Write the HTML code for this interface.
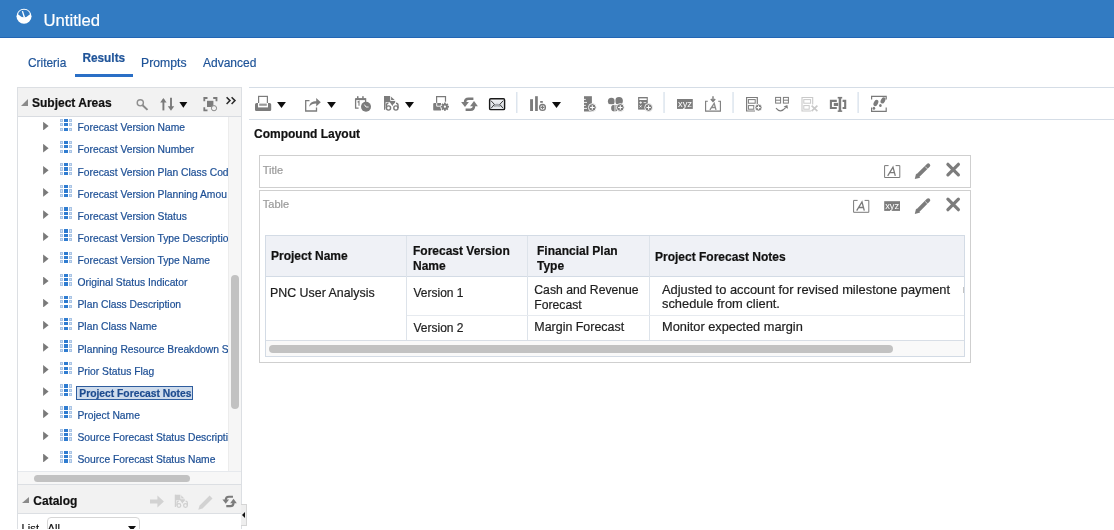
<!DOCTYPE html>
<html><head><meta charset="utf-8">
<style>
*{box-sizing:border-box;margin:0;padding:0}
html,body{width:1114px;height:530px;overflow:hidden;background:#fff;font-family:"Liberation Sans",sans-serif;position:relative}
.a{position:absolute}
.t{position:absolute;white-space:nowrap;line-height:1;-webkit-text-stroke-width:0.2px}
#hdr{left:0;top:0;width:1114px;height:38px;background:#327bc2;border-bottom:1px solid #2366b4}
.tab{color:#1f5499}
#lp{left:17px;top:87px;width:225px;height:450px;border:1px solid #dcdfe3;border-bottom:none}
.ph{background:#f2f2f2}
.tr{color:#1d4f95;font-size:10.3px}
.ex{position:absolute;left:43.1px;width:5.5px;height:8.8px;background:#7a7a7a;clip-path:polygon(0 0,100% 50%,0 100%)}
.gi{position:absolute;left:60px;width:12px;height:12px}
#tb{left:249px;top:87px;width:865px;height:33px;border-top:1px solid #d5dde6;border-bottom:1px solid #d5dde6}
.ic{position:absolute}
.dd{position:absolute;width:0;height:0;border-left:4.5px solid transparent;border-right:4.5px solid transparent;border-top:6.5px solid #111}
.sep{position:absolute;top:92px;width:2px;height:22px;background:#dfe6ee}
.box{position:absolute;border:1px solid #cfcfcf}
.lbl{color:#9a9a9a;font-size:11px}
.th{font-weight:bold;color:#111;font-size:12px}
.td{color:#1e1e1e;font-size:12.4px}
.gi i{position:absolute;width:3px;height:3.2px;border:0.8px solid #a9c4e5;background:#d3e1f2}
.gi i.d{width:3.8px;background:#2f7cd0;border-color:#2f7cd0}
.gi i:nth-child(1),.gi i:nth-child(4),.gi i:nth-child(7){left:0}
.gi i:nth-child(2),.gi i:nth-child(5),.gi i:nth-child(8){left:4px}
.gi i:nth-child(3),.gi i:nth-child(6),.gi i:nth-child(9){left:9px}
.gi i:nth-child(-n+3){top:0.3px}
.gi i:nth-child(n+4):nth-child(-n+6){top:4.6px}
.gi i:nth-child(n+7){top:9px}
</style></head><body><div id="root" style="position:absolute;left:0;top:0;width:1114px;height:528.9px;overflow:hidden;background:#fff;will-change:transform">
<div id="hdr" class="a"></div>
<svg class="a" style="left:0;top:0" width="40" height="38" viewBox="0 0 40 38">
<circle cx="24" cy="16.2" r="7.5" fill="#fff"/>
<path d="M18 14.2 A6.3 6.3 0 0 1 30 14.2 Q24 20.2 18 14.2z" fill="#327bc2"/>
<path d="M22.4 11.1 L24.1 16.4" stroke="#fff" stroke-width="1.4"/><circle cx="24.2" cy="16.8" r="0.9" fill="#fff"/>
</svg>
<div class="t" style="left:43.5px;top:13.3px;font-size:16.7px;color:#fff">Untitled</div>

<!-- tabs -->
<div class="t tab" style="left:28px;top:57.7px;font-size:11.9px">Criteria</div>
<div class="t tab" style="left:82.4px;top:53.1px;font-size:11.85px;font-weight:bold">Results</div>
<div class="t tab" style="left:141.1px;top:56.7px;font-size:12.2px">Prompts</div>
<div class="t tab" style="left:203px;top:56.8px;font-size:12px">Advanced</div>
<div class="a" style="left:74.5px;top:74px;width:58.7px;height:3px;background:#2a6fc6"></div>

<!-- left panel -->
<div id="lp" class="a"></div>
<div class="a ph" style="left:18px;top:88px;width:223px;height:29px;border-bottom:1px solid #d9dce1"></div>
<div class="a" style="left:20.8px;top:99px;width:0;height:0;border-left:7px solid transparent;border-bottom:7px solid #8a8a8a"></div>
<div class="t" style="left:32px;top:96.5px;font-size:12px;font-weight:bold;color:#111">Subject Areas</div>
<div class="a" style="left:228px;top:117px;width:13px;height:354px;background:#f6f6f6;border-left:1px solid #ececec"></div>
<div class="a" style="left:231px;top:275px;width:8px;height:134px;border-radius:4px;background:#c2c2c2"></div>
<div class="a" style="left:18px;top:471px;width:223px;height:14px;background:#f7f7f7;border-top:1px solid #e6e9ed"></div>
<div class="a" style="left:34px;top:475px;width:156px;height:6.5px;border-radius:3.5px;background:#c2c2c2"></div>
<div class="a ph" style="left:18px;top:484px;width:223px;height:30px;border-top:1px solid #dcdfe3;border-bottom:1px solid #dcdfe3"></div>
<div class="a" style="left:22px;top:496.5px;width:0;height:0;border-left:7px solid transparent;border-bottom:6.5px solid #8a8a8a"></div>
<div class="t" style="left:33.3px;top:494.5px;font-size:12px;font-weight:bold;color:#111">Catalog</div>
<div class="t" style="left:21.6px;top:523.3px;font-size:11.2px;color:#111">List</div>
<div class="a" style="left:46.5px;top:516.5px;width:93px;height:20px;border:1px solid #d6d6d6;border-radius:4px;background:#fff"></div>
<div class="t" style="left:47.6px;top:523.4px;font-size:11.2px;color:#111">All</div>
<div class="a" style="left:128px;top:526px;width:0;height:0;border-left:4.5px solid transparent;border-right:4.5px solid transparent;border-top:5px solid #111"></div>
<div class="a" style="left:241px;top:503.5px;width:6px;height:22px;background:#eeeeee;border:1px solid #d5d5d5;border-left:none"></div>
<div class="a" style="left:242px;top:511.5px;width:0;height:0;border-top:3px solid transparent;border-bottom:3px solid transparent;border-right:3.5px solid #111"></div>
<div class="a" style="left:0;top:0;width:228px;height:471px;overflow:hidden">
<div class="ex" style="top:121.65px"></div>
<div class="gi" style="top:118.50px"><i></i><i class="d"></i><i></i><i></i><i class="d"></i><i></i><i></i><i class="d"></i><i></i></div>
<div class="t tr" style="left:77.5px;top:123.27px">Forecast Version Name</div>
<div class="ex" style="top:143.78px"></div>
<div class="gi" style="top:140.63px"><i></i><i class="d"></i><i></i><i></i><i class="d"></i><i></i><i></i><i class="d"></i><i></i></div>
<div class="t tr" style="left:77.5px;top:145.40px">Forecast Version Number</div>
<div class="ex" style="top:165.91px"></div>
<div class="gi" style="top:162.76px"><i></i><i class="d"></i><i></i><i></i><i class="d"></i><i></i><i></i><i class="d"></i><i></i></div>
<div class="t tr" style="left:77.5px;top:167.53px">Forecast Version Plan Class Cod</div>
<div class="ex" style="top:188.04px"></div>
<div class="gi" style="top:184.89px"><i></i><i class="d"></i><i></i><i></i><i class="d"></i><i></i><i></i><i class="d"></i><i></i></div>
<div class="t tr" style="left:77.5px;top:189.66px">Forecast Version Planning Amou</div>
<div class="ex" style="top:210.17px"></div>
<div class="gi" style="top:207.02px"><i></i><i class="d"></i><i></i><i></i><i class="d"></i><i></i><i></i><i class="d"></i><i></i></div>
<div class="t tr" style="left:77.5px;top:211.79px">Forecast Version Status</div>
<div class="ex" style="top:232.30px"></div>
<div class="gi" style="top:229.15px"><i></i><i class="d"></i><i></i><i></i><i class="d"></i><i></i><i></i><i class="d"></i><i></i></div>
<div class="t tr" style="left:77.5px;top:233.92px">Forecast Version Type Descriptio</div>
<div class="ex" style="top:254.43px"></div>
<div class="gi" style="top:251.28px"><i></i><i class="d"></i><i></i><i></i><i class="d"></i><i></i><i></i><i class="d"></i><i></i></div>
<div class="t tr" style="left:77.5px;top:256.05px">Forecast Version Type Name</div>
<div class="ex" style="top:276.56px"></div>
<div class="gi" style="top:273.41px"><i></i><i class="d"></i><i></i><i></i><i class="d"></i><i></i><i></i><i class="d"></i><i></i></div>
<div class="t tr" style="left:77.5px;top:278.18px">Original Status Indicator</div>
<div class="ex" style="top:298.69px"></div>
<div class="gi" style="top:295.54px"><i></i><i class="d"></i><i></i><i></i><i class="d"></i><i></i><i></i><i class="d"></i><i></i></div>
<div class="t tr" style="left:77.5px;top:300.31px">Plan Class Description</div>
<div class="ex" style="top:320.82px"></div>
<div class="gi" style="top:317.67px"><i></i><i class="d"></i><i></i><i></i><i class="d"></i><i></i><i></i><i class="d"></i><i></i></div>
<div class="t tr" style="left:77.5px;top:322.44px">Plan Class Name</div>
<div class="ex" style="top:342.95px"></div>
<div class="gi" style="top:339.80px"><i></i><i class="d"></i><i></i><i></i><i class="d"></i><i></i><i></i><i class="d"></i><i></i></div>
<div class="t tr" style="left:77.5px;top:344.57px">Planning Resource Breakdown S</div>
<div class="ex" style="top:365.08px"></div>
<div class="gi" style="top:361.93px"><i></i><i class="d"></i><i></i><i></i><i class="d"></i><i></i><i></i><i class="d"></i><i></i></div>
<div class="t tr" style="left:77.5px;top:366.70px">Prior Status Flag</div>
<div class="ex" style="top:387.21px"></div>
<div class="gi" style="top:384.06px"><i></i><i class="d"></i><i></i><i></i><i class="d"></i><i></i><i></i><i class="d"></i><i></i></div>
<div class="t tr" style="left:76px;top:385.76px;height:14.5px;width:117px;border:1px solid #2f5d9e;background:#cfdcec;font-weight:bold;padding:1.9px 0 0 2.3px;font-size:10.3px;color:#1d4b8f">Project Forecast Notes</div>
<div class="ex" style="top:409.34px"></div>
<div class="gi" style="top:406.19px"><i></i><i class="d"></i><i></i><i></i><i class="d"></i><i></i><i></i><i class="d"></i><i></i></div>
<div class="t tr" style="left:77.5px;top:410.96px">Project Name</div>
<div class="ex" style="top:431.47px"></div>
<div class="gi" style="top:428.32px"><i></i><i class="d"></i><i></i><i></i><i class="d"></i><i></i><i></i><i class="d"></i><i></i></div>
<div class="t tr" style="left:77.5px;top:433.09px">Source Forecast Status Descripti</div>
<div class="ex" style="top:453.60px"></div>
<div class="gi" style="top:450.45px"><i></i><i class="d"></i><i></i><i></i><i class="d"></i><i></i><i></i><i class="d"></i><i></i></div>
<div class="t tr" style="left:77.5px;top:455.22px">Source Forecast Status Name</div>
</div>
<div id="tb" class="a"></div>

<div class="t" style="left:254px;top:128.2px;font-size:12px;font-weight:bold;color:#111">Compound Layout</div>
<div class="box" style="left:259px;top:155px;width:712px;height:33px"></div>
<div class="t lbl" style="left:262.8px;top:164.5px">Title</div>
<div class="box" style="left:259px;top:190px;width:712px;height:173px"></div>
<div class="t lbl" style="left:262.8px;top:199.4px">Table</div>
<svg class="a" style="left:0;top:0" width="1114" height="530" viewBox="0 0 1114 530">
<g fill="#7c7c7c" stroke="none">
<!-- printer -->
<rect x="258.6" y="96.4" width="8.8" height="10" fill="none" stroke="#7c7c7c" stroke-width="1.2"/>
<path d="M256.6 103 h13 a1.6 1.6 0 0 1 1.6 1.6 v5.2 a1.3 1.3 0 0 1 -1.3 1.3 h-13.6 a1.3 1.3 0 0 1 -1.3 -1.3 v-5.2 a1.6 1.6 0 0 1 1.6 -1.6z"/>
<rect x="258" y="103" width="10" height="4.4" fill="#fff"/>
<rect x="259.2" y="103.6" width="7.6" height="2.2" fill="#9a9a9a"/>
<!-- export -->
<path d="M309.5 100.6 h-3.8 v10.4 h10.8 v-3.6" fill="none" stroke="#7c7c7c" stroke-width="1.3"/>
<path d="M309.2 106.8 c0.4 -4 3 -5.6 7 -5.6 v-3.1 l4.6 4.2 -4.6 4.2 v-3 c-3.2 0 -5.2 1 -7 3.3z"/>
<!-- schedule -->
<path d="M355.6 99 h10 v3 M355.6 99 v9.2 h3" fill="none" stroke="#7c7c7c" stroke-width="1.3"/>
<rect x="355" y="98.3" width="11" height="1.8"/>
<rect x="357" y="96.2" width="1.5" height="2.5"/><rect x="362.2" y="96.2" width="1.5" height="2.5"/>
<path d="M357.6 102.2 l1.4 -0.9 v4.4" fill="none" stroke="#7c7c7c" stroke-width="1.1"/>
<circle cx="366" cy="106.7" r="5"/>
<path d="M364.4 104.6 l1.6 2.4 h2.6" fill="none" stroke="#fff" stroke-width="0.9"/>
<!-- preview -->
<path d="M384 96 H390.4 L395.2 100.6 V102.4 L393.2 104.6 L392.4 106.2 L391.4 104.4 L389.8 102.2 H385.4 V109.6 H384z"/>
<path d="M390.6 95.6 V100.5 H395.6" fill="none" stroke="#fff" stroke-width="0.9"/>
<g fill="none" stroke="#fff" stroke-width="3.2">
<circle cx="388.5" cy="108" r="2.2"/><circle cx="395.9" cy="108" r="2.2"/>
</g>
<g fill="none" stroke="#7a7a7a" stroke-width="1.4">
<circle cx="388.5" cy="108" r="2.1"/><circle cx="395.9" cy="108" r="2.1"/>
<path d="M386.4 108 V105 Q386.4 103.2 388.4 103.2 M398 108 V105 Q398 103.2 396 103.2"/>
</g>
<rect x="384" y="96" width="1.3" height="13.6"/>
<!-- print device -->
<path d="M436.6 105.8 V96.6 H445.5 V101.8" fill="none" stroke="#7a7a7a" stroke-width="1.2"/>
<path d="M434.4 102.9 H441 V110.6 H434.4 Q433.2 110.6 433.2 109.4 V104.1 Q433.2 102.9 434.4 102.9z"/>
<path d="M436.7 102.8 V106.2 H441.2" fill="none" stroke="#fff" stroke-width="0.9"/>
<circle cx="444.9" cy="106.7" r="4.6" fill="#fff"/>
<circle cx="444.9" cy="106.7" r="2.9"/>
<rect x="444.00" y="102.60" width="1.8" height="2" transform="rotate(0 444.9 106.7)"/><rect x="444.00" y="102.60" width="1.8" height="2" transform="rotate(45 444.9 106.7)"/><rect x="444.00" y="102.60" width="1.8" height="2" transform="rotate(90 444.9 106.7)"/><rect x="444.00" y="102.60" width="1.8" height="2" transform="rotate(135 444.9 106.7)"/><rect x="444.00" y="102.60" width="1.8" height="2" transform="rotate(180 444.9 106.7)"/><rect x="444.00" y="102.60" width="1.8" height="2" transform="rotate(225 444.9 106.7)"/><rect x="444.00" y="102.60" width="1.8" height="2" transform="rotate(270 444.9 106.7)"/><rect x="444.00" y="102.60" width="1.8" height="2" transform="rotate(315 444.9 106.7)"/>
<circle cx="444.9" cy="106.7" r="1.1" fill="#fff"/>
<!-- refresh -->
<g id="rf">
<path d="M473.4 98.7 H468.6 Q465 98.7 465 102.4" fill="none" stroke="#7a7a7a" stroke-width="2.5"/>
<path d="M461.1 102 H468.9 L465 107z"/>
<path d="M465.6 109.7 H470.4 Q474 109.7 474 106" fill="none" stroke="#7a7a7a" stroke-width="2.5"/>
<path d="M470.1 106.2 H477.9 L474 101z"/>
</g>
<!-- email -->
<defs><linearGradient id="eg" x1="0" y1="0" x2="0" y2="1"><stop offset="0" stop-color="#f4f5f7"/><stop offset="0.6" stop-color="#dfe2e6"/><stop offset="1" stop-color="#eceef1"/></linearGradient></defs>
<rect x="489.6" y="98.8" width="15" height="10.8" rx="1.2" fill="url(#eg)" stroke="#1a1a1a" stroke-width="1.4"/>
<path d="M494.2 104.4 Q497.1 102.9 500 104.4 L500.4 107 Q497.1 105.8 493.8 107z" fill="#a5a8ac"/>
<path d="M490.9 100.6 L494.4 104.4 L491 108.4 M503.3 100.6 L499.8 104.4 L503.2 108.4" fill="none" stroke="#3a3a3a" stroke-width="1"/>
<!-- bar chart + -->
<rect x="530.1" y="99.2" width="2.9" height="11.8"/>
<rect x="535.1" y="96.2" width="2.7" height="14.8"/>
<rect x="540.2" y="101" width="2.6" height="1.8"/>
<circle cx="542.5" cy="107.4" r="4.4" fill="#fff"/>
<circle cx="542.5" cy="107.4" r="2.9" fill="#fff" stroke="#7a7a7a" stroke-width="1.3"/>
<path d="M542.5 105.5 v3.8 M540.6 107.4 h3.8" stroke="#7a7a7a" stroke-width="1.2"/>
<!-- table + -->
<path d="M584 96.2 h7.9 v15.3 h-7.9z"/>
<path d="M584 99.4 h1.8 M584 102.4 h3 M584 105.4 h1.8 M584 108.4 h3" stroke="#fff" stroke-width="0.9"/>
<circle cx="592.3" cy="107.5" r="3.9" fill="#7c7c7c" stroke="#fff" stroke-width="0.9"/>
<path d="M592.3 105.3 v4.4 M590.1 107.5 h4.4" stroke="#fff" stroke-width="1.1"/>
<!-- pie + -->
<circle cx="611.4" cy="101.3" r="3.5"/>
<circle cx="619" cy="100.8" r="3.9"/>
<circle cx="614.6" cy="108" r="3.5"/>
<path d="M615 97 v15 M609 104.6 h14" stroke="#fff" stroke-width="0.8"/>
<circle cx="620.3" cy="107.5" r="3.9" fill="#7c7c7c" stroke="#fff" stroke-width="0.9"/>
<path d="M620.3 105.3 v4.4 M618.1 107.5 h4.4" stroke="#fff" stroke-width="1.1"/>
<!-- calc + -->
<rect x="638.1" y="97" width="9.7" height="12.6"/>
<rect x="639.3" y="98.4" width="7.4" height="1.6" fill="#fff"/>
<path d="M639.4 102.6 h2.6 M640.7 101.3 v2.6 M643.6 102.6 h2.6 M639.6 105.4 l2 2 M641.6 105.4 l-2 2" stroke="#fff" stroke-width="0.8"/>
<circle cx="648.6" cy="107.5" r="3.9" fill="#7c7c7c" stroke="#fff" stroke-width="0.9"/>
<path d="M648.6 105.3 v4.4 M646.4 107.5 h4.4" stroke="#fff" stroke-width="1.1"/>
<!-- xyz -->
<rect x="677" y="99" width="15.8" height="9.9"/>
<text x="678" y="107.2" font-family="Liberation Sans" font-size="9.6" fill="#fff" textLength="14" lengthAdjust="spacingAndGlyphs">xyz</text>
<!-- title A -->
<path d="M707.8 101.3 h-2.2 v9.8 h14.8 v-9.8 h-2.2" fill="none" stroke="#7c7c7c" stroke-width="1.1"/>
<path d="M713 96.3 v4 M710.8 99 l2.2 2.4 2.2 -2.4" fill="none" stroke="#7c7c7c" stroke-width="1.4"/>
<path d="M709.9 109.9 L714.2 103.4 L716 109.9 M711.5 107.5 H715.4" fill="none" stroke="#8a8a8a" stroke-width="1.3"/>
<!-- layout + -->
<path d="M755 111 h-8.4 v-13.5 h10.7 v6.5" fill="none" stroke="#7c7c7c" stroke-width="1.2"/>
<rect x="748.4" y="99.6" width="6.8" height="3.6" fill="none" stroke="#7c7c7c" stroke-width="1"/>
<rect x="748.4" y="105.6" width="5.4" height="3.6" fill="none" stroke="#7c7c7c" stroke-width="1"/>
<circle cx="758.5" cy="107.6" r="3.5" fill="#7c7c7c" stroke="#fff" stroke-width="0.8"/>
<path d="M758.5 105.6 v4 M756.5 107.6 h4" stroke="#fff" stroke-width="1.1"/>
<!-- swap -->
<rect x="775.6" y="97.4" width="5" height="5.7" fill="none" stroke="#7c7c7c" stroke-width="1"/>
<path d="M775.6 100.2 h5" stroke="#7c7c7c" stroke-width="1"/>
<rect x="783.4" y="97.4" width="5" height="5.7" fill="none" stroke="#7c7c7c" stroke-width="1"/>
<path d="M783.4 100.2 h5" stroke="#7c7c7c" stroke-width="1"/>
<path d="M776 108.2 q4.4 5.6 9.6 -0.6" fill="none" stroke="#7c7c7c" stroke-width="1.1"/>
<path d="M783.6 106.6 l3.8 -1.6 0.6 3.8z"/>
<!-- delete disabled -->
<g stroke="#c9c9c9" fill="none">
<path d="M811 111 h-9 v-13.5 h10.7 v7" stroke-width="1.1"/>
<rect x="803.8" y="99.6" width="6.8" height="3.6" stroke-width="1"/>
<rect x="803.8" y="105.6" width="5.4" height="3.6" stroke-width="1"/>
<path d="M811.6 105.6 l5.8 5.6 M817.4 105.6 l-5.8 5.6" stroke-width="1.6"/>
</g>
<!-- merge -->
<path d="M836.8 100.9 h-5.9 v7.1 h5.9" fill="none" stroke="#7a7a7a" stroke-width="2.1"/>
<rect x="833.8" y="102.9" width="4.4" height="3.1"/>
<rect x="838.7" y="97.6" width="2.5" height="13.6"/>
<rect x="837.7" y="96.9" width="4.5" height="1.6"/><rect x="837.7" y="110.4" width="4.5" height="1.5"/>
<path d="M842.6 100.9 h2.6 v7.1 h-2.6" fill="none" stroke="#7a7a7a" stroke-width="2.1"/>
<!-- steps -->
<path d="M871.6 99.5 v-3.2 h14.6 v3.2 M871.6 107.6 v3.7 h14.6 v-3.7" fill="none" stroke="#7a7a7a" stroke-width="1.2"/>
<ellipse cx="875.9" cy="103" rx="2.1" ry="3.3" transform="rotate(28 875.9 103)"/>
<ellipse cx="873.9" cy="108.3" rx="1.3" ry="1.5"/>
<ellipse cx="883" cy="100.4" rx="2.1" ry="3.3" transform="rotate(28 883 100.4)"/>
<ellipse cx="880.4" cy="105.6" rx="1.3" ry="1.5"/>
<!-- subject area header icons -->
<circle cx="140.3" cy="102.8" r="3.1" fill="none" stroke="#8f8f8f" stroke-width="1.4"/>
<path d="M142.6 105.2 l4.9 4.7" stroke="#8a8a8a" stroke-width="2"/>
<path d="M163.4 99.6 v10.8" fill="none" stroke="#7a7a7a" stroke-width="1.9"/>
<path d="M160.2 102.6 l3.2 -4.6 3.2 4.6z" fill="#7a7a7a"/>
<path d="M171 97.8 v10.8" fill="none" stroke="#7a7a7a" stroke-width="1.9"/>
<path d="M167.8 106.2 l3.2 4.6 3.2 -4.6z" fill="#7a7a7a"/>
<path d="M204.3 101.2 v-3.2 h3.2 M213.2 98 h3.3 v3.2 M204.3 107.2 v3.2 h3.2" fill="none" stroke="#7a7a7a" stroke-width="1.8"/>
<rect x="207" y="100.8" width="6.4" height="6.2"/>
<circle cx="214" cy="108.2" r="2.6" fill="#f2f2f2" stroke="#8a8a8a" stroke-width="1"/>
<path d="M226.6 97.2 l3.4 3.4 -3.4 3.4 M231.6 97.2 l3.4 3.4 -3.4 3.4" fill="none" stroke="#2a2a2a" stroke-width="1.5"/>
</g>
<!-- dropdown triangles -->
<g fill="#0d0d0d">
<path d="M277.1 102.1 h8.8 l-4.4 5.8z"/>
<path d="M327.1 102.1 h8.8 l-4.4 5.8z"/>
<path d="M405 102 h9 l-4.5 6z"/>
<path d="M552 102 h9 l-4.5 5.9z"/>
<path d="M179.4 101.9 h7.9 l-3.95 5.9z"/>
</g>
<!-- separators -->
<g fill="#dde5ee">
<rect x="516" y="92" width="1.5" height="21"/>
<rect x="663.3" y="92" width="1.5" height="21"/>
<rect x="732.3" y="92" width="1.5" height="21"/>
<rect x="857.4" y="92" width="1.5" height="21"/>
</g>
</svg>
<!-- inner table -->
<div class="a" style="left:265px;top:235px;width:700px;height:122px;border:1px solid #d3dbe5;background:#fff"></div>
<div class="a" style="left:266px;top:341px;width:698px;height:15px;background:#f9f9f9"></div>
<div class="a" style="left:266px;top:236px;width:698px;height:41px;background:#eff1f6;border-bottom:1px solid #d3dbe5"></div>
<div class="a" style="left:406px;top:236px;width:1px;height:104px;background:#dde3ea"></div>
<div class="a" style="left:527px;top:236px;width:1px;height:104px;background:#dde3ea"></div>
<div class="a" style="left:649px;top:236px;width:1px;height:104px;background:#dde3ea"></div>
<div class="a" style="left:407px;top:315px;width:557px;height:1px;background:#e6eaef"></div>
<div class="a" style="left:266px;top:340px;width:698px;height:1px;background:#d8dee6"></div>
<div class="a" style="left:268.5px;top:345px;width:624px;height:8px;border-radius:4px;background:#c2c2c2"></div>
<div class="a" style="left:963px;top:287px;width:1px;height:6px;background:#c4c4c4"></div>
<div class="t th" style="left:271px;top:250.4px">Project Name</div>
<div class="t th" style="left:413px;top:244.4px;line-height:15px">Forecast Version<br>Name</div>
<div class="t th" style="left:537px;top:243.6px;line-height:15.3px">Financial Plan<br>Type</div>
<div class="t th" style="left:655px;top:250.8px">Project Forecast Notes</div>
<div class="t td" style="left:270px;top:286.5px;font-size:12.4px">PNC User Analysis</div>
<div class="t td" style="left:413.5px;top:286.8px;font-size:12px">Version 1</div>
<div class="t td" style="left:534.3px;top:282.9px;font-size:12.2px;line-height:14.8px">Cash and Revenue<br>Forecast</div>
<div class="t td" style="left:662px;top:282.8px;font-size:12.86px;line-height:14.4px">Adjusted to account for revised milestone payment<br>schedule from client.</div>
<div class="t td" style="left:413.5px;top:321.8px;font-size:12px">Version 2</div>
<div class="t td" style="left:534.3px;top:320.8px;font-size:12.45px">Margin Forecast</div>
<div class="t td" style="left:662px;top:320.5px;font-size:12.8px">Monitor expected margin</div>
<!-- box icons -->
<svg class="a" style="left:0;top:0" width="1114" height="530" viewBox="0 0 1114 530">
<g id="bA" fill="none" stroke="#7a7a7a">
<path d="M888.6 165.6 h-4 v11.9 h15.2 v-11.9 h-4.2" stroke-width="1"/>
<path d="M887.7 175.8 L893 167.2 L895.3 175.8 M889.7 172.7 H894.5" stroke-width="1.3"/>
</g>
<g transform="translate(-31 34.8)" fill="none" stroke="#7a7a7a">
<path d="M888.6 165.6 h-4 v11.9 h15.2 v-11.9 h-4.2" stroke-width="1"/>
<path d="M887.7 175.8 L893 167.2 L895.3 175.8 M889.7 172.7 H894.5" stroke-width="1.3"/>
</g>
<rect x="884.2" y="201.2" width="15.8" height="9.7" fill="#7c7c7c"/>
<text x="885.2" y="209.4" font-family="Liberation Sans" font-size="9.6" fill="#fff" textLength="14" lengthAdjust="spacingAndGlyphs">xyz</text>
<g fill="#7c7c7c">
<g id="pen2">
<path d="M918.4 175.2 L928.3 165.3" stroke="#7c7c7c" stroke-width="3.9" stroke-linecap="round"/>
<path d="M914.8 179 l1.3 -5.4 4.1 4.1z"/>
<path d="M925.2 166.6 l2.7 2.7" stroke="#fff" stroke-width="0.7"/>
<path d="M947.9 164.3 L958.4 174.8 M958.4 164.3 L947.9 174.8" stroke="#7c7c7c" stroke-width="3.2" stroke-linecap="round"/>
</g>
<g transform="translate(0 34.9)">
<path d="M918.4 175.2 L928.3 165.3" stroke="#7c7c7c" stroke-width="3.9" stroke-linecap="round"/>
<path d="M914.8 179 l1.3 -5.4 4.1 4.1z"/>
<path d="M925.2 166.6 l2.7 2.7" stroke="#fff" stroke-width="0.7"/>
<path d="M947.9 164.3 L958.4 174.8 M958.4 164.3 L947.9 174.8" stroke="#7c7c7c" stroke-width="3.2" stroke-linecap="round"/>
</g>
</g>
<!-- catalog icons -->
<g fill="#d2d2d2">
<path d="M150 499.6 h7.4 v-4 l6.5 6 -6.5 6 v-4 h-7.4z"/>
<g transform="translate(174.9 494.8) scale(0.89) translate(-384 -96)">
<path fill="#d0d0d0" d="M384 96 H390.4 L395.2 100.6 V102.4 L393.2 104.6 L392.4 106.2 L391.4 104.4 L389.8 102.2 H385.4 V109.6 H384z"/>
<path d="M390.6 95.6 V100.5 H395.6" fill="none" stroke="#f2f2f2" stroke-width="0.9"/>
<g fill="none" stroke="#f2f2f2" stroke-width="3.2">
<circle cx="388.5" cy="108" r="2.2"/><circle cx="395.9" cy="108" r="2.2"/>
</g>
<g fill="none" stroke="#d0d0d0" stroke-width="1.4">
<circle cx="388.5" cy="108" r="2.1"/><circle cx="395.9" cy="108" r="2.1"/>
<path d="M386.4 108 V105 Q386.4 103.2 388.4 103.2 M398 108 V105 Q398 103.2 396 103.2"/>
</g>
<rect x="384" y="96" width="1.3" height="13.6" fill="#d0d0d0"/>
</g>
<path d="M209.6 495.6 l2.9 2.9 -10 10 -4.2 1.3 1.3 -4.2z"/>
</g>
<g fill="#7c7c7c">
<g transform="translate(222.4 495.6) scale(0.86) translate(-461.1 -97.4)">
<path d="M473.4 98.7 H468.6 Q465 98.7 465 102.4" fill="none" stroke="#7a7a7a" stroke-width="2.5"/>
<path d="M461.1 102 H468.9 L465 107z"/>
<path d="M465.6 109.7 H470.4 Q474 109.7 474 106" fill="none" stroke="#7a7a7a" stroke-width="2.5"/>
<path d="M470.1 106.2 H477.9 L474 101z"/>
</g>
</g>
</svg>
</div></body></html>
